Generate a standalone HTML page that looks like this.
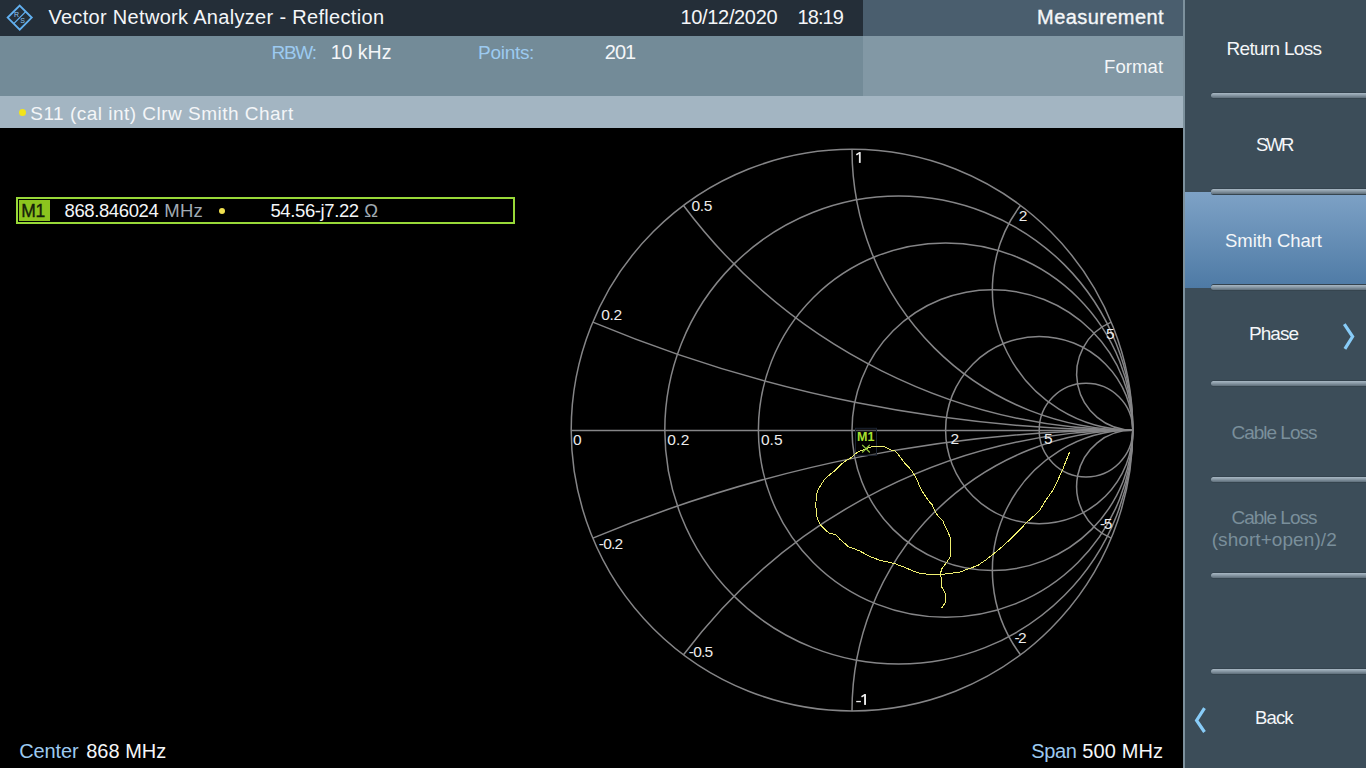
<!DOCTYPE html>
<html><head><meta charset="utf-8">
<style>
*{margin:0;padding:0;box-sizing:border-box}
html,body{width:1366px;height:768px;overflow:hidden;background:#000;font-family:"Liberation Sans",sans-serif;}
.abs{position:absolute}
.t{position:absolute;white-space:pre;line-height:1}
#bg_title{left:0;top:0;width:863px;height:36px;background:#242e38}
#bg_meas{left:863px;top:0;width:320px;height:36px;background:#4a5e6e}
#bg_row2{left:0;top:36px;width:863px;height:60px;background:#738b98}
#bg_fmt{left:863px;top:36px;width:320px;height:60px;background:#8298a5}
#bg_tbar{left:0;top:96px;width:1183px;height:32px;background:#a3b5c2}
#bg_side{left:1183px;top:0;width:183px;height:768px;background:#3c4d59}
#bg_sideb{left:1183px;top:0;width:2px;height:768px;background:#7d919d}
#bg_sel{left:1185px;top:192px;width:181px;height:96px;background:linear-gradient(#7ea2c6,#4e7aa5)}
.sep{position:absolute;left:1211px;width:155px;height:5px;border-radius:3px 0 0 3px;background:linear-gradient(#a8b8c4 0%,#8a9aa6 45%,#5e6e7a 100%);box-shadow:0 -1px 0 #34434e,0 1px 0 #36454f}
</style></head><body>
<div class="abs bg" id="bg_title"></div>
<div class="abs bg" id="bg_meas"></div>
<div class="abs bg" id="bg_row2"></div>
<div class="abs bg" id="bg_fmt"></div>
<div class="abs bg" id="bg_tbar"></div>
<div class="abs bg" id="bg_side"></div>
<div class="abs bg" id="bg_sideb"></div>
<div class="abs bg" id="bg_sel"></div>
<div class="sep bg" style="top:93px"></div>
<div class="sep bg" style="top:189px"></div>
<div class="sep bg" style="top:285px"></div>
<div class="sep bg" style="top:381px"></div>
<div class="sep bg" style="top:477px"></div>
<div class="sep bg" style="top:573px"></div>
<div class="sep bg" style="top:669px"></div>

<svg class="abs bg" style="left:0;top:0" width="40" height="36" viewBox="0 0 40 36">
<g fill="none" stroke="#62b0f0"><path d="M19.7 5.6 L31.7 17.6 L19.7 29.6 L7.7 17.6 Z" stroke-width="1.9"/><path d="M13.7 23.6 L25.7 11.6" stroke-width="1.3"/></g>
<text x="13.9" y="17.4" font-size="7" fill="#8cc4f0" font-family="Liberation Sans">R</text>
<text x="20.2" y="23.3" font-size="7" fill="#8cc4f0" font-family="Liberation Sans">S</text>
</svg>

<div class="abs bg" style="left:18.6px;top:109px;width:7px;height:7px;border-radius:50%;background:#f2e41a"></div>
<svg class="abs bg" style="left:1185px;top:0" width="181" height="768">
<path d="M159.3 324.2 L167.6 336.5 L159.9 348.8" fill="none" stroke="#88ccf8" stroke-width="3.2"/>
<path d="M19.5 708.2 L11.6 720.5 L19.5 732" fill="none" stroke="#88ccf8" stroke-width="3.2"/>
</svg>

<div class="abs bg" style="left:16px;top:197px;width:499px;height:27px;border:2px solid #98d838"></div>
<div class="abs bg" style="left:19px;top:200px;width:31px;height:21px;background:#8cc41e"></div>
<div class="abs bg" style="left:219px;top:208px;width:6px;height:6px;border-radius:50%;background:#f0e050"></div>

<svg class="abs bg" style="left:0;top:0" width="1183" height="768">
<g fill="none" stroke="#858587" stroke-width="1.5">
<circle cx="852.0" cy="430.1" r="280.8"/>
<line x1="571.2" y1="430.5" x2="1132.8" y2="430.5"/>
<circle cx="898.80" cy="430.10" r="234.00"/>
<circle cx="945.60" cy="430.10" r="187.20"/>
<circle cx="992.40" cy="430.10" r="140.40"/>
<circle cx="1039.20" cy="430.10" r="93.60"/>
<circle cx="1086.00" cy="430.10" r="46.80"/>
<path d="M1132.80 430.10 A1404.00 1404.00 0 0 1 592.80 322.10"/>
<path d="M1132.80 430.10 A1404.00 1404.00 0 0 0 592.80 538.10"/>
<path d="M1132.80 430.10 A561.60 561.60 0 0 1 683.52 205.46"/>
<path d="M1132.80 430.10 A561.60 561.60 0 0 0 683.52 654.74"/>
<path d="M1132.80 430.10 A280.80 280.80 0 0 1 852.00 149.30"/>
<path d="M1132.80 430.10 A280.80 280.80 0 0 0 852.00 710.90"/>
<path d="M1132.80 430.10 A140.40 140.40 0 0 1 1020.48 205.46"/>
<path d="M1132.80 430.10 A140.40 140.40 0 0 0 1020.48 654.74"/>
<path d="M1132.80 430.10 A56.16 56.16 0 0 1 1111.20 322.10"/>
<path d="M1132.80 430.10 A56.16 56.16 0 0 0 1111.20 538.10"/>
</g>
<rect x="855.5" y="428.3" width="21" height="27" fill="#000" fill-opacity="0.35" stroke="#1c2432" stroke-width="1"/>
<polyline points="941.40,608.40 945.10,602.90 945.10,592.90 941.40,586.50 941.40,578.30 940.50,574.60 941.40,569.20 946.90,561.90 950.55,556.40 950.60,545.00 950.40,537.50 949.25,535.10 946.90,529.90 944.60,525.20 942.80,520.50 938.10,516.40 935.80,512.30 933.40,508.20 932.30,504.70 929.90,502.30 928.20,500.00 923.75,493.90 919.80,486.90 917.50,480.60 914.40,475.20 912.00,471.25 908.90,467.30 905.00,463.40 901.90,459.50 898.75,455.20 895.60,451.30 891.70,450.20 887.80,448.60 884.70,447.00 880.00,446.25 878.00,446.25 872.50,446.60 869.40,447.40 864.70,449.40 860.00,450.90 856.10,453.30 849.80,458.75 845.90,460.70 841.25,464.20 835.00,470.50 828.75,475.50 824.80,479.00 821.70,483.75 818.20,489.20 816.60,494.70 816.50,501.50 815.50,502.80 815.50,507.40 816.50,508.70 816.50,515.80 817.80,519.70 821.10,525.60 825.60,530.10 829.50,533.40 835.40,534.40 839.90,539.20 843.90,542.80 848.50,546.70 858.90,550.60 869.90,556.50 880.30,560.40 888.10,562.00 894.65,563.60 905.10,567.50 912.00,570.50 919.60,573.30 929.60,574.50 940.50,574.50 951.50,573.30 960.60,571.90 966.00,569.60 971.00,567.90 977.80,565.40 985.60,560.10 994.40,553.20 1003.20,545.90 1013.00,536.60 1019.80,529.80 1026.60,522.50 1034.90,515.00 1040.00,509.80 1045.60,500.50 1052.50,490.80 1058.30,479.10 1063.20,468.30 1066.60,459.50 1069.55,452.20" fill="none" stroke="#f0f070" stroke-width="1" stroke-linejoin="round" shape-rendering="crispEdges"/>
<g stroke="#94cc40" stroke-width="1.15"><line x1="862.2" y1="444.9" x2="869.8" y2="452.5"/><line x1="869.8" y1="444.9" x2="862.2" y2="452.5"/></g>
<g fill="#ececec" stroke="none"><rect x="858.9" y="152.1" width="1.8" height="10.8"/><rect x="856.2" y="700.9" width="4.7" height="1.3"/><rect x="864.1" y="694.1" width="1.9" height="10.8"/></g>
<g stroke="#ececec" stroke-width="1.5" stroke-linecap="round"><line x1="859.4" y1="152.9" x2="856.8" y2="154.5"/><line x1="864.6" y1="694.9" x2="862" y2="696.5"/></g>
<text x="857" y="441" font-family="Liberation Sans" font-weight="bold" font-size="12.5" fill="#a8e030">M1</text>
</svg>
<div class="t" id="title" style="left:48.39px;top:6.96px;font-size:20px;color:#f4f6f8;letter-spacing:0.316px;">Vector Network Analyzer - Reflection</div>
<div class="t" id="date" style="left:680.59px;top:6.76px;font-size:20px;color:#f4f6f8;letter-spacing:-0.350px;">10/12/2020</div>
<div class="t" id="time" style="left:797.59px;top:6.76px;font-size:20px;color:#f4f6f8;letter-spacing:-0.945px;">18:19</div>
<div class="t" id="meas" style="left:1037.10px;top:7.06px;font-size:20px;color:#f4f6f8;letter-spacing:0.414px;-webkit-text-stroke:0.35px #f4f6f8;">Measurement</div>
<div class="t" id="rbw" style="left:271.54px;top:43.01px;font-size:19px;color:#9ccaf0;letter-spacing:-1.290px;">RBW:</div>
<div class="t" id="rbwv" style="left:330.71px;top:42.58px;font-size:19.5px;color:#f4f6f8;letter-spacing:0.000px;">10 kHz</div>
<div class="t" id="pts" style="left:478.10px;top:42.91px;font-size:19px;color:#9ccaf0;letter-spacing:-0.300px;">Points:</div>
<div class="t" id="ptsv" style="left:604.71px;top:42.06px;font-size:20px;color:#f4f6f8;letter-spacing:-0.945px;">201</div>
<div class="t" id="fmt" style="left:1103.98px;top:57.53px;font-size:18.5px;color:#f4f6f8;letter-spacing:0.108px;">Format</div>
<div class="t" id="s11" style="left:30.32px;top:103.51px;font-size:19px;color:#f4f6f8;letter-spacing:0.484px;">S11 (cal int) Clrw Smith Chart</div>
<div class="t" id="b1" style="left:1226.54px;top:38.91px;font-size:19px;color:#f4f6f8;letter-spacing:-0.702px;">Return Loss</div>
<div class="t" id="b2" style="left:1256.05px;top:136.33px;font-size:18.5px;color:#f4f6f8;letter-spacing:-2.430px;">SWR</div>
<div class="t" id="b3" style="left:1225.10px;top:232.43px;font-size:18.5px;color:#f4f6f8;letter-spacing:-0.090px;">Smith Chart</div>
<div class="t" id="b4" style="left:1248.98px;top:323.71px;font-size:19px;color:#f4f6f8;letter-spacing:-0.922px;">Phase</div>
<div class="t" id="b5" style="left:1231.54px;top:423.21px;font-size:19px;color:#7a8f9b;letter-spacing:-1.020px;">Cable Loss</div>
<div class="t" id="b6a" style="left:1231.54px;top:508.21px;font-size:19px;color:#7a8f9b;letter-spacing:-1.020px;">Cable Loss</div>
<div class="t" id="b6b" style="left:1211.71px;top:529.61px;font-size:19px;color:#7a8f9b;letter-spacing:0.069px;">(short+open)/2</div>
<div class="t" id="b8" style="left:1255.10px;top:709.33px;font-size:18.5px;color:#f4f6f8;letter-spacing:-0.870px;">Back</div>
<div class="t" id="m1t" style="left:21.37px;top:202.78px;font-size:17.5px;color:#14200a;letter-spacing:-0.540px;-webkit-text-stroke:0.35px #14200a;">M1</div>
<div class="t" id="mfreq" style="left:64.49px;top:201.53px;font-size:18.5px;color:#f4f6f8;letter-spacing:-0.390px;">868.846024</div>
<div class="t" id="mhz" style="left:164.37px;top:201.53px;font-size:18.5px;color:#a0aab2;letter-spacing:0.135px;">MHz</div>
<div class="t" id="mimp" style="left:270.44px;top:201.53px;font-size:18.5px;color:#f4f6f8;letter-spacing:-0.387px;">54.56-j7.22</div>
<div class="t" id="mohm" style="left:364.22px;top:201.53px;font-size:18.5px;color:#a0aab2;letter-spacing:0.000px;">&#937;</div>
<div class="t" id="ctr" style="left:19.27px;top:741.06px;font-size:20px;color:#9ccaf0;letter-spacing:-0.144px;">Center</div>
<div class="t" id="ctrv" style="left:86.22px;top:741.06px;font-size:20px;color:#f4f6f8;letter-spacing:0.000px;">868 MHz</div>
<div class="t" id="span" style="left:1031.37px;top:740.86px;font-size:20px;color:#9ccaf0;letter-spacing:-0.420px;">Span</div>
<div class="t" id="spanv" style="left:1082.32px;top:740.86px;font-size:20px;color:#f4f6f8;letter-spacing:0.105px;">500 MHz</div>
<div class="t" id="l05" style="left:691.44px;top:198.17px;font-size:15.5px;color:#ececec;letter-spacing:-0.270px;">0.5</div>
<div class="t" id="l2t" style="left:1018.71px;top:208.27px;font-size:15.5px;color:#ececec;letter-spacing:0.000px;">2</div>
<div class="t" id="l02t" style="left:601.27px;top:307.47px;font-size:15.5px;color:#ececec;letter-spacing:-0.315px;">0.2</div>
<div class="t" id="l5t" style="left:1106.10px;top:326.37px;font-size:15.5px;color:#ececec;letter-spacing:0.000px;">5</div>
<div class="t" id="l0" style="left:573.05px;top:432.37px;font-size:15.5px;color:#ececec;letter-spacing:0.000px;">0</div>
<div class="t" id="l02" style="left:667.27px;top:432.37px;font-size:15.5px;color:#ececec;letter-spacing:0.225px;">0.2</div>
<div class="t" id="l05h" style="left:760.88px;top:432.37px;font-size:15.5px;color:#ececec;letter-spacing:0.090px;">0.5</div>
<div class="t" id="l2h" style="left:950.44px;top:431.37px;font-size:15.5px;color:#ececec;letter-spacing:0.000px;">2</div>
<div class="t" id="l5h" style="left:1044.05px;top:431.37px;font-size:15.5px;color:#ececec;letter-spacing:0.000px;">5</div>
<div class="t" id="lm02" style="left:598.83px;top:536.27px;font-size:15.5px;color:#ececec;letter-spacing:-0.810px;">-0.2</div>
<div class="t" id="lm5" style="left:1099.88px;top:516.27px;font-size:15.5px;color:#ececec;letter-spacing:-1.350px;">-5</div>
<div class="t" id="lm2" style="left:1014.44px;top:630.47px;font-size:15.5px;color:#ececec;letter-spacing:-1.665px;">-2</div>
<div class="t" id="lm05" style="left:688.83px;top:644.47px;font-size:15.5px;color:#ececec;letter-spacing:-0.780px;">-0.5</div>
</body></html>
